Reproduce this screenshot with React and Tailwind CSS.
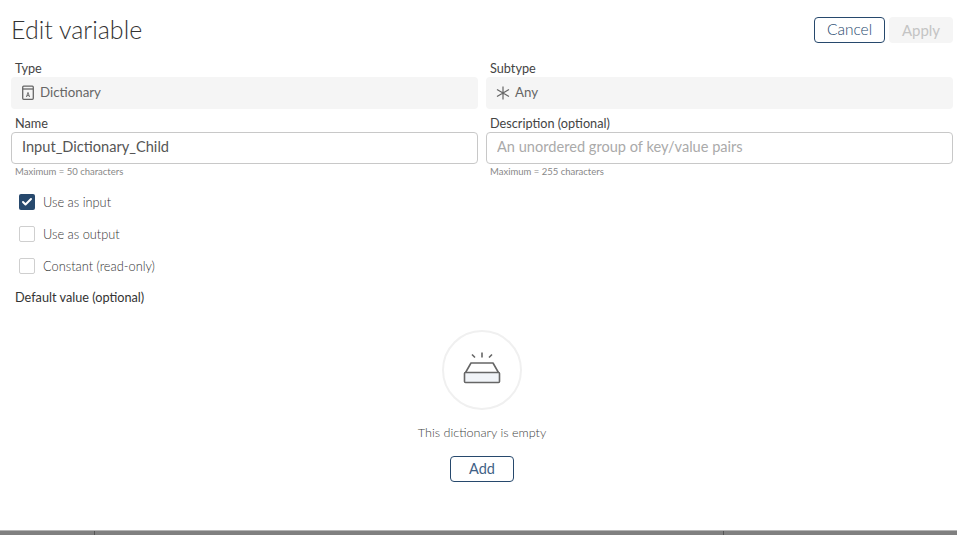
import { Check } from "lucide-react";

const DictionaryIcon = () => (
  <svg width="14" height="16" viewBox="0 0 14 16" fill="none" className="shrink-0">
    <rect x="1.7" y="1.2" width="10.6" height="13.1" rx="1" stroke="#666" strokeWidth="1.3" />
    <path d="M2 4h10" stroke="#666" strokeWidth="1.3" />
    <path d="M5.4 12l1.6-4.6L8.6 12M6 10.6h2" stroke="#666" strokeWidth="0.9" />
  </svg>
);

const AnyIcon = () => (
  <svg width="14" height="14" viewBox="0 0 14 14" fill="none" className="shrink-0">
    <path d="M7 .5v13M1 3.4l12 7.2M13 3.4L1 10.6" stroke="#666" strokeWidth="1.2" />
  </svg>
);

const EmptyIcon = () => (
  <svg width="38" height="32" viewBox="0 0 38 32" fill="none">
    <path d="M2 21.5L8 11h22l6 10.5" stroke="#666" strokeWidth="1.6" strokeLinejoin="round" />
    <rect x="1.5" y="20.5" width="35" height="10" rx="1" fill="#f1f4f8" stroke="#666" strokeWidth="1.6" />
    <path d="M19 0.5v5M9 2.5l3 3M29 2.5l-3 3" stroke="#666" strokeWidth="1.6" />
  </svg>
);

const Option = ({ label, checked }) => (
  <label className="flex items-center gap-2 h-8 pl-2">
    {checked ? (
      <span className="w-4 h-4 rounded-[2px] bg-[#27496d] flex items-center justify-center">
        <Check className="w-3 h-3 text-white" strokeWidth={4} />
      </span>
    ) : (
      <span className="w-4 h-4 rounded-[2px] border border-[#cfcfcf] bg-white" />
    )}
    <span className="pt-[2px] text-[12.8px] font-light text-[#333]">{label}</span>
  </label>
);

const ReadOnlyField = ({ label, icon, value }) => (
  <div>
    <div className="pl-1 h-[18px] leading-[18px] text-[12.7px] text-[#444]">{label}</div>
    <div className="h-8 rounded bg-[#f5f5f5] flex items-center gap-[5px] px-[10px] text-[13.3px] text-[#666]">
      {icon}
      {value}
    </div>
  </div>
);

const InputField = ({ label, value, placeholder, hint }) => (
  <div>
    <div className="pl-1 h-[18px] leading-[18px] text-[12.7px] text-[#444]">{label}</div>
    <input
      readOnly
      value={value}
      placeholder={placeholder}
      className="w-full h-8 rounded border border-[#c8c8c8] pl-[10px] pr-[10px] pb-1 text-[14.6px] text-[#555] placeholder:text-[#aaa] outline-none"
    />
    <div className="pl-1 mt-[1px] h-[14px] leading-[14px] text-[9.5px] text-[#888]">{hint}</div>
  </div>
);

export default function App() {
  return (
    <div className="h-screen flex flex-col bg-white font-['Lato','Open_Sans',sans-serif] overflow-hidden">
      <div className="flex-1 pl-[11px] pr-1">
        {/* Header */}
        <header className="flex items-center justify-between h-[59px] pt-[1px]">
          <h1 className="text-[25px] font-light text-[#333]">Edit variable</h1>
          <div className="flex gap-1">
            <button className="w-[71px] h-[26px] rounded border border-[#27496d] text-[15.5px] font-light text-[#27496d]">
              Cancel
            </button>
            <button className="w-[64px] h-[26px] rounded bg-[#f5f5f5] text-[15px] text-[#c4c4c4]">
              Apply
            </button>
          </div>
        </header>

        {/* Fields */}
        <div className="grid grid-cols-2 gap-x-2 gap-y-[5px]">
          <ReadOnlyField label="Type" icon={<DictionaryIcon />} value="Dictionary" />
          <ReadOnlyField label="Subtype" icon={<AnyIcon />} value="Any" />
          <InputField
            label="Name"
            value="Input_Dictionary_Child"
            hint="Maximum = 50 characters"
          />
          <InputField
            label="Description (optional)"
            value=""
            placeholder="An unordered group of key/value pairs"
            hint="Maximum = 255 characters"
          />
        </div>

        <div className="mt-[7px]">
          <Option label="Use as input" checked />
          <Option label="Use as output" />
          <Option label="Constant (read-only)" />
        </div>

        <div className="mt-[6px] pl-1 h-[18px] leading-[18px] text-[12.7px] text-[#333]">
          Default value (optional)
        </div>

        {/* Empty state */}
        <div className="flex flex-col items-center mt-6">
          <div className="w-20 h-20 rounded-full border-2 border-[#f0f0f0] flex items-center justify-center pb-1">
            <EmptyIcon />
          </div>
          <p className="mt-[14px] h-[18px] leading-[18px] text-[12.6px] font-light text-[#444]">This dictionary is empty</p>
          <button className="mt-[14px] w-16 h-[26px] rounded border border-[#27496d] text-[14.5px] text-[#3f6186]">
            Add
          </button>
        </div>
      </div>

      {/* Bottom bar */}
      <div className="h-[5px] bg-[#808080] border-t border-t-[#b5b5b5] flex">
        <div className="w-[95px] border-r border-r-[#555]" />
        <div className="w-[629px] border-r border-r-[#555]" />
      </div>
    </div>
  );
}
